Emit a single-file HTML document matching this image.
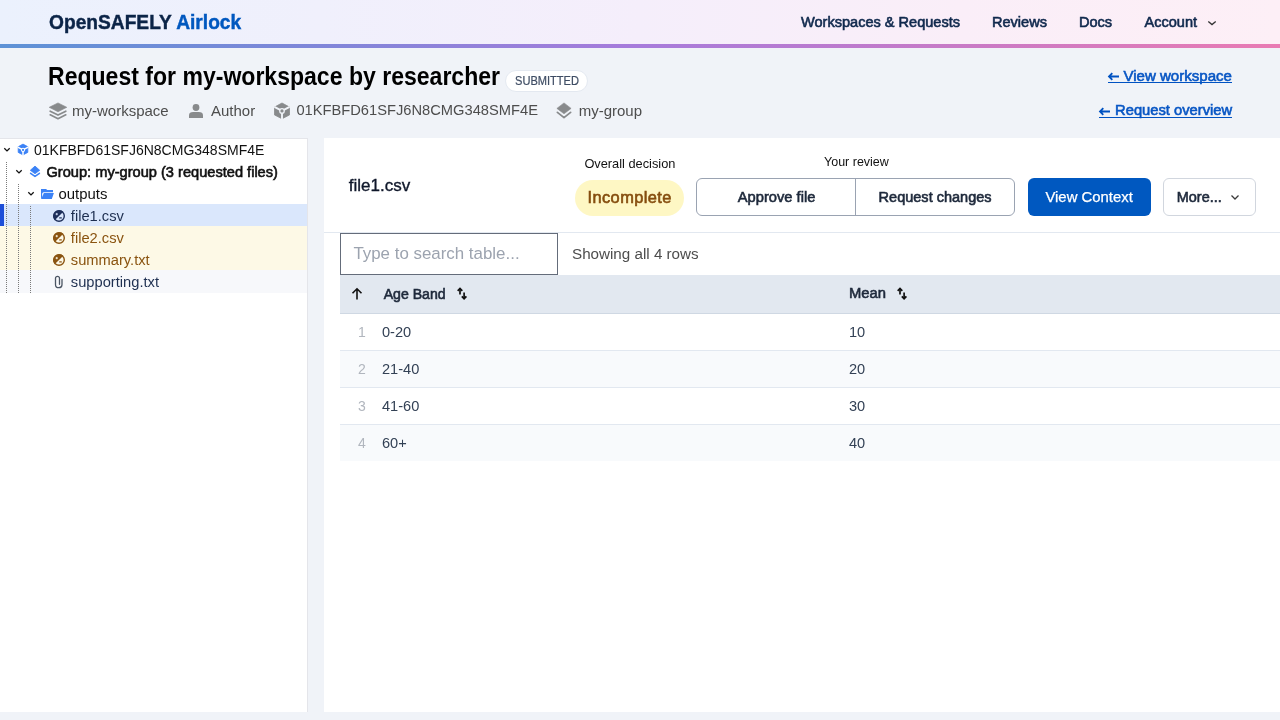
<!DOCTYPE html>
<html><head><meta charset="utf-8">
<style>
*{box-sizing:border-box;margin:0;padding:0}
html,body{width:1280px;height:720px;overflow:hidden;background:#f0f3f8;font-family:"Liberation Sans",sans-serif;position:relative}
.wrap{position:absolute;left:0;top:0;width:1280px;height:720px;will-change:transform}
.a{position:absolute;white-space:nowrap;line-height:1}
.hdr{position:absolute;left:0;top:0;width:1280px;height:44px;background:linear-gradient(90deg,#ebf1fd 0%,#f0f0fc 25%,#f5eefb 50%,#faeef8 75%,#fdeff6 100%)}
.bar{position:absolute;left:0;top:44px;width:1280px;height:4px;background:linear-gradient(90deg,#5d92d6 0%,#8086d9 25%,#a77bdb 50%,#c87ac6 75%,#e97bb3 100%)}
.b{font-weight:700}
.sb{font-weight:400;-webkit-text-stroke-width:0.6px}
.nav{font-size:14.55px;font-weight:400;-webkit-text-stroke-width:0.6px;color:#10294d}
.meta{font-size:15px;color:#4d4d4d}
.lnk{font-size:13.7px;color:#0856c4}
.panel{position:absolute;background:#fff}
.tr{position:absolute;left:0;width:307px;height:22px}
.tt{font-size:14px;color:#111}
.dot{position:absolute;width:1px;background:repeating-linear-gradient(180deg,#7a7a7a 0 1px,transparent 1px 2px)}
.th{font-size:13.3px;color:#1e293b}
.td{font-size:14.6px;color:#334155}
.rn{font-size:14px;color:#b1b6be}
.row{position:absolute;left:340px;width:940px;height:37px;border-bottom:1px solid #e2e8f0}
</style></head><body><div class="wrap">
<div class="hdr"></div>
<div class="bar"></div>
<div class="a b" style="left:49px;top:11.6px;font-size:20.8px;color:#0b2447;transform:scaleX(0.922);transform-origin:0 0;-webkit-text-stroke:0.45px #0b2447">OpenSAFELY <span style="color:#0058bf;-webkit-text-stroke:0.45px #0058bf">Airlock</span></div>
<div class="a nav" style="left:801px;top:14.5px">Workspaces &amp; Requests</div>
<div class="a nav" style="left:992px;top:14.5px">Reviews</div>
<div class="a nav" style="left:1079px;top:14.5px">Docs</div>
<div class="a nav" style="left:1144.5px;top:14.5px">Account</div>
<svg class="a" style="left:1207px;top:19px" width="10" height="8" viewBox="0 0 10 8"><path d="M1.3 2.4 L5 5.6 L8.7 2.4" fill="none" stroke="#333" stroke-width="1.3"/></svg>

<div class="a b" style="left:48px;top:63.8px;font-size:25px;color:#000;transform:scaleX(0.9216);transform-origin:0 0">Request for my-workspace by researcher</div>
<div class="a" style="left:505px;top:70px;width:83px;height:22px;border:1px solid #e3e8f0;border-radius:11px;background:#fff"></div>
<div class="a" style="left:514.5px;top:74.8px;font-size:12px;color:#3e4c63;transform:scaleX(0.923);transform-origin:0 0;-webkit-text-stroke:0.2px #3e4c63">SUBMITTED</div>

<!-- meta row -->
<svg class="a" style="left:49px;top:102px" width="18" height="18" viewBox="0 0 18 18"><path d="M9 0.9 L17.8 5.3 L9 9.8 L0.2 5.3 Z" fill="#888a8c" stroke="#888a8c" stroke-width="0.6" stroke-linejoin="round"/><path d="M1.2 9.2 L9 13.1 L16.8 9.2 M1.2 12.8 L9 16.7 L16.8 12.8" fill="none" stroke="#888a8c" stroke-width="1.7" stroke-linecap="round" stroke-linejoin="round"/></svg>
<div class="a meta" style="left:72px;top:103.3px">my-workspace</div>
<svg class="a" style="left:188px;top:103px" width="16" height="16" viewBox="0 0 16 16"><circle cx="8" cy="4.5" r="3.4" fill="#888a8c"/><path d="M1 15 L1 12.3 C1 10 2.6 9 5.2 9 L10.8 9 C13.4 9 15 10 15 12.3 L15 15 Z" fill="#888a8c"/></svg>
<div class="a meta" style="left:211px;top:103.3px">Author</div>
<svg class="a" style="left:273px;top:102px" width="18" height="18" viewBox="0 0 18 18"><path d="M9 1 L16.5 5.1 L16.5 12.9 L9 16.8 L1.5 12.9 L1.5 5.1 Z" fill="#888a8c" stroke="#888a8c" stroke-width="0.8" stroke-linejoin="round"/><path d="M9 8.9 L1.4 4.9 M9 8.9 L16.6 4.9 M9 8.9 L9 17.5" stroke="#f0f3f8" stroke-width="1.9"/><circle cx="9" cy="8.9" r="2.9" fill="#f0f3f8"/><circle cx="9" cy="8.9" r="1.6" fill="#888a8c"/></svg>
<div class="a meta" style="left:296.4px;top:103.3px;font-size:14.7px">01KFBFD61SFJ6N8CMG348SMF4E</div>
<svg class="a" style="left:555px;top:102px" width="18" height="18" viewBox="0 0 18 18"><path d="M9 0.9 L16.1 6.4 L9 11.8 L1.9 6.4 Z" fill="#888a8c" stroke="#888a8c" stroke-width="0.6" stroke-linejoin="round"/><path d="M2.4 10.4 L9 15.6 L15.6 10.4" fill="none" stroke="#888a8c" stroke-width="1.8" stroke-linecap="round" stroke-linejoin="round"/></svg>
<div class="a meta" style="left:578.7px;top:103.3px">my-group</div>

<svg class="a" style="left:1107px;top:72px" width="13" height="9" viewBox="0 0 13 9"><path d="M12 4.5 L2.2 4.5 M5.3 1.2 L2 4.5 L5.3 7.8" fill="none" stroke="#0052c2" stroke-width="1.8"/></svg>
<div class="a lnk sb" style="left:1123.4px;top:67.9px;font-size:15.07px">View workspace</div>
<div class="a" style="left:1108px;top:82px;width:124px;height:1px;background:#0052c2"></div>
<svg class="a" style="left:1098px;top:107px" width="13" height="9" viewBox="0 0 13 9"><path d="M12 4.5 L2.2 4.5 M5.3 1.2 L2 4.5 L5.3 7.8" fill="none" stroke="#0052c2" stroke-width="1.8"/></svg>
<div class="a lnk sb" style="left:1115.1px;top:103.3px;font-size:14.72px">Request overview</div>
<div class="a" style="left:1099px;top:117px;width:133px;height:1px;background:#0052c2"></div>

<!-- left panel -->
<div class="panel" style="left:0;top:138px;width:308px;height:574px;border-top:1px solid #e4e5ea;border-right:1px solid #e4e5ea"></div>
<div class="tr" style="top:204px;background:#dae7fc"></div>
<div class="a" style="left:0;top:204px;width:4px;height:22px;background:#1d4ed8"></div>
<div class="tr" style="top:226px;height:44px;background:#fdf9e6"></div>
<div class="tr" style="top:270px;height:23px;background:#f7f8fb"></div>
<div class="dot" style="left:6px;top:162px;height:131px"></div>
<div class="dot" style="left:18px;top:184px;height:109px"></div>
<div class="dot" style="left:30px;top:206px;height:87px"></div>

<svg class="a" style="left:3px;top:147px" width="8" height="6" viewBox="0 0 8 6"><path d="M1.3 1.2 L4 3.9 L6.7 1.2" fill="none" stroke="#111" stroke-width="1.3"/></svg>
<svg class="a" style="left:17px;top:143px" width="12" height="13" viewBox="0 0 12 13"><path d="M6 1.1 L10.8 3.7 L10.8 9.4 L6 11.9 L1.2 9.4 L1.2 3.7 Z" fill="#3b82f6" stroke="#3b82f6" stroke-width="0.8" stroke-linejoin="round"/><path d="M6 6.9 L0.8 4.1 M6 6.9 L11.2 4.1 M6 6.9 L6 12.5" stroke="#fff" stroke-width="1.5"/><circle cx="6" cy="6.9" r="2.1" fill="#fff"/><circle cx="6" cy="6.9" r="1.1" fill="#3b82f6"/></svg>
<div class="a tt" style="left:34px;top:143.1px">01KFBFD61SFJ6N8CMG348SMF4E</div>

<svg class="a" style="left:15px;top:169px" width="8" height="6" viewBox="0 0 8 6"><path d="M1.3 1.2 L4 3.9 L6.7 1.2" fill="none" stroke="#111" stroke-width="1.3"/></svg>
<svg class="a" style="left:29px;top:165px" width="12" height="13" viewBox="0 0 12 13"><path d="M6 1.1 L10.7 5.3 L6 8.7 L1.3 5.3 Z" fill="#3b82f6" stroke="#3b82f6" stroke-width="0.8" stroke-linejoin="round"/><path d="M1.6 8.3 L6 11.4 L10.4 8.3" fill="none" stroke="#3b82f6" stroke-width="1.6" stroke-linecap="round" stroke-linejoin="round"/></svg>
<div class="a tt sb" style="left:46.5px;top:164.6px;font-size:14.61px">Group: my-group (3 requested files)</div>

<svg class="a" style="left:27px;top:191px" width="8" height="6" viewBox="0 0 8 6"><path d="M1.3 1.2 L4 3.9 L6.7 1.2" fill="none" stroke="#111" stroke-width="1.3"/></svg>
<svg class="a" style="left:40px;top:188px" width="15" height="12" viewBox="0 0 15 12"><path d="M1 1 L6 1 L7.3 2.1 L13 2.1 L13 4.2 L3.6 4.2 Q2.4 4.3 2.2 5.6 L2 9.5 L1 11 Z" fill="#3b82f6"/><path d="M3.9 4.9 L13.9 4.9 L11.8 11 L1.1 11 Z" fill="#3b82f6"/></svg>
<div class="a tt" style="left:58.5px;top:186.6px;font-size:14.9px">outputs</div>

<svg class="a" style="left:53px;top:210px" width="12" height="12" viewBox="0 0 12 12"><circle cx="6" cy="6" r="5.3" fill="none" stroke="#1e2f5a" stroke-width="1.4"/><path d="M1.7 10.3 A6.1 6.1 0 0 1 10.3 1.7 Z" fill="#1e2f5a"/><path d="M2.6 4.1 L4.9 4.1 M3.75 2.95 L3.75 5.25" stroke="#dae7fc" stroke-width="0.9"/><path d="M6.2 7.9 L8.8 7.9" stroke="#1e2f5a" stroke-width="1.2"/></svg>
<div class="a tt" style="left:70.8px;top:208.6px;font-size:14.7px;color:#1e2f50">file1.csv</div>
<svg class="a" style="left:53px;top:232px" width="12" height="12" viewBox="0 0 12 12"><circle cx="6" cy="6" r="5.3" fill="none" stroke="#8a5410" stroke-width="1.4"/><path d="M1.7 10.3 A6.1 6.1 0 0 1 10.3 1.7 Z" fill="#8a5410"/><path d="M2.6 4.1 L4.9 4.1 M3.75 2.95 L3.75 5.25" stroke="#fdf9e6" stroke-width="0.9"/><path d="M6.2 7.9 L8.8 7.9" stroke="#8a5410" stroke-width="1.2"/></svg>
<div class="a tt" style="left:70.8px;top:230.6px;font-size:14.7px;color:#8a5410">file2.csv</div>
<svg class="a" style="left:53px;top:254px" width="12" height="12" viewBox="0 0 12 12"><circle cx="6" cy="6" r="5.3" fill="none" stroke="#8a5410" stroke-width="1.4"/><path d="M1.7 10.3 A6.1 6.1 0 0 1 10.3 1.7 Z" fill="#8a5410"/><path d="M2.6 4.1 L4.9 4.1 M3.75 2.95 L3.75 5.25" stroke="#fdf9e6" stroke-width="0.9"/><path d="M6.2 7.9 L8.8 7.9" stroke="#8a5410" stroke-width="1.2"/></svg>
<div class="a tt" style="left:70.8px;top:252.6px;font-size:14.7px;color:#8a5410">summary.txt</div>
<svg class="a" style="left:54px;top:275px" width="10" height="14" viewBox="0 0 10 14"><path d="M5.5 9.3 L5.5 3.3 A2 2 0 0 0 1.5 3.3 L1.5 9.4 A3.25 3.25 0 0 0 8 9.4 L8 4.4" fill="none" stroke="#4b5563" stroke-width="1.3" stroke-linecap="round"/></svg>
<div class="a tt" style="left:70.8px;top:274.6px;font-size:14.7px;color:#1e2f50">supporting.txt</div>

<!-- right panel -->
<div class="panel" style="left:324px;top:138px;width:956px;height:574px"></div>
<div class="a" style="left:324px;top:232px;width:956px;height:1px;background:#e2e8f0"></div>
<div class="a sb" style="left:348.7px;top:176.7px;font-size:17.02px;color:#0f172a;-webkit-text-stroke-width:0.35px">file1.csv</div>
<div class="a" style="left:584.4px;top:158.2px;font-size:12.8px;color:#111">Overall decision</div>
<div class="a" style="left:575px;top:180px;width:109px;height:36px;border-radius:18px;background:#fef7c4"></div>
<div class="a sb" style="left:587.5px;top:189.2px;font-size:16.4px;letter-spacing:0.42px;color:#854d0e">Incomplete</div>
<div class="a" style="left:824px;top:155.9px;font-size:12.5px;color:#111">Your review</div>
<div class="a" style="left:696px;top:178px;width:319px;height:38px;border:1px solid #9aa3b2;border-radius:6px;background:#fff"></div>
<div class="a" style="left:855px;top:179px;width:1px;height:36px;background:#9aa3b2"></div>
<div class="a sb" style="left:737.8px;top:189.8px;font-size:14.69px;color:#1e293b">Approve file</div>
<div class="a sb" style="left:878.6px;top:190px;font-size:14.52px;color:#1e293b">Request changes</div>
<div class="a" style="left:1028px;top:178px;width:123px;height:38px;border-radius:6px;background:#0058c0"></div>
<div class="a" style="left:1045.4px;top:189.5px;font-size:14.9px;color:#fff;-webkit-text-stroke:0.25px #fff">View Context</div>
<div class="a" style="left:1163px;top:178px;width:93px;height:38px;border:1px solid #d1d6de;border-radius:6px;background:#fff"></div>
<div class="a sb" style="left:1176.8px;top:189.7px;font-size:14.46px;color:#1e293b">More...</div>
<svg class="a" style="left:1230px;top:194px" width="10" height="7" viewBox="0 0 10 7"><path d="M1.5 1.5 L5 5 L8.5 1.5" fill="none" stroke="#3a3a3a" stroke-width="1.25"/></svg>

<div class="a" style="left:340px;top:233px;width:218px;height:42px;border:1px solid #646c7a;background:#fff"></div>
<div class="a" style="left:353.4px;top:246.1px;font-size:16.9px;color:#9ca3af">Type to search table...</div>
<div class="a" style="left:572px;top:246px;font-size:15.2px;color:#4d4d4d">Showing all 4 rows</div>

<div class="a" style="left:340px;top:275px;width:940px;height:39px;background:#e2e8f0;border-bottom:1px solid #cfd8e3"></div>
<svg class="a" style="left:350px;top:287px" width="14" height="14" viewBox="0 0 14 14"><path d="M7 12.5 L7 2 M2.5 6.3 L7 1.8 L11.5 6.3" fill="none" stroke="#111" stroke-width="1.6"/></svg>
<div class="a th sb" style="left:383.7px;top:287px;font-size:14.11px">Age Band</div>
<svg class="a" style="left:456px;top:286px" width="14" height="16" viewBox="0 0 14 16"><path d="M4 2.8 L4 8.4 M8.1 6.6 L8.1 12.6" fill="none" stroke="#111" stroke-width="1.7"/><path d="M1.7 4.9 L4 2.5 L6.3 4.9 M5.8 10.3 L8.1 12.7 L10.4 10.3" fill="none" stroke="#111" stroke-width="1.7" stroke-linejoin="miter"/></svg>
<div class="a th sb" style="left:849px;top:286.3px;font-size:14.79px">Mean</div>
<svg class="a" style="left:896px;top:286px" width="14" height="16" viewBox="0 0 14 16"><path d="M4 2.8 L4 8.4 M8.1 6.6 L8.1 12.6" fill="none" stroke="#111" stroke-width="1.7"/><path d="M1.7 4.9 L4 2.5 L6.3 4.9 M5.8 10.3 L8.1 12.7 L10.4 10.3" fill="none" stroke="#111" stroke-width="1.7" stroke-linejoin="miter"/></svg>

<div class="row" style="top:314px"></div>
<div class="row" style="top:351px;background:#f8fafc"></div>
<div class="row" style="top:388px"></div>
<div class="row" style="top:425px;height:36px;background:#f8fafc;border-bottom:none"></div>
<div class="a rn" style="left:358px;top:325px">1</div><div class="a td" style="left:382px;top:324.5px">0-20</div><div class="a td" style="left:849px;top:324.5px">10</div>
<div class="a rn" style="left:358px;top:362px">2</div><div class="a td" style="left:382px;top:361.5px">21-40</div><div class="a td" style="left:849px;top:361.5px">20</div>
<div class="a rn" style="left:358px;top:399px">3</div><div class="a td" style="left:382px;top:398.5px">41-60</div><div class="a td" style="left:849px;top:398.5px">30</div>
<div class="a rn" style="left:358px;top:436px">4</div><div class="a td" style="left:382px;top:435.5px">60+</div><div class="a td" style="left:849px;top:435.5px">40</div>
</div></body></html>
